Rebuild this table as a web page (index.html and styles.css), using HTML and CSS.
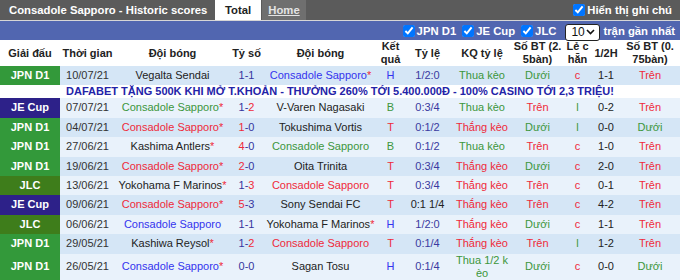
FILE: index.html
```html
<!DOCTYPE html>
<html lang="vi">
<head>
<meta charset="utf-8">
<title>Consadole Sapporo - Historic scores</title>
<link rel="stylesheet" href="styles.css">
</head>
<body>
<div class="page">
  <div class="topbar">
    <div class="title">Consadole Sapporo - Historic scores</div>
    <div class="tab tab-active">Total</div>
    <div class="tab tab-home"><a class="tab-link">Home</a></div>
    <label class="note"><input type="checkbox" class="cb" checked>Hiển thị ghi chú</label>
  </div>
  <div class="filterbar">
    <label class="flt"><input type="checkbox" class="cb" checked>JPN D1</label>
    <label class="flt"><input type="checkbox" class="cb" checked>JE Cup</label>
    <label class="flt"><input type="checkbox" class="cb" checked>JLC</label>
    <div class="count"><span class="count-val">10</span><svg class="chev" width="9" height="6" viewBox="0 0 9 6"><path d="M1 1 L4.5 4.5 L8 1" fill="none" stroke="#111" stroke-width="1.6"/></svg></div>
    <span class="flt-text">trận gần nhất</span>
  </div>
  <table class="scores">
    <colgroup>
      <col class="c1"><col class="c2"><col class="c3"><col class="c4"><col class="c5"><col class="c6">
      <col class="c7"><col class="c8"><col class="c9"><col class="c10"><col class="c11"><col class="c12">
    </colgroup>
    <thead>
      <tr>
        <th>Giải đấu</th><th>Thời gian</th><th>Đội bóng</th><th>Tỷ số</th><th>Đội bóng</th><th>Kết<br>quả</th>
        <th>Tỷ lệ</th><th>KQ tỷ lệ</th><th>Số BT (2.<br>5bàn)</th><th>Lẻ c<br>hẵn</th><th>1/2H</th><th>Số BT (0.<br>75bàn)</th>
      </tr>
    </thead>
    <tbody>
      <tr class="dark">
        <td class="lg jpn">JPN D1</td><td class="date">10/07/21</td><td>Vegalta Sendai</td><td class="sc">1-1</td>
        <td class="blue">Consadole Sapporo<span class="ast">*</span></td><td class="blue">H</td><td class="hc">1/2:0</td>
        <td class="g">Thua kèo</td><td class="g">Dưới</td><td class="r">c</td><td>1-1</td><td class="r">Trên</td>
      </tr>
      <tr class="banner"><td colspan="12">DAFABET TẶNG 500K KHI MỞ T.KHOẢN - THƯỞNG 260% TỚI 5.400.000Đ - 100% CASINO TỚI 2,3 TRIỆU!</td></tr>
      <tr class="light">
        <td class="lg jec">JE Cup</td><td class="date">07/07/21</td><td class="g">Consadole Sapporo<span class="ast">*</span></td><td class="sc">1-<span class="r">2</span></td>
        <td>V-Varen Nagasaki</td><td class="g">B</td><td class="hc">0:3/4</td>
        <td class="g">Thua kèo</td><td class="r">Trên</td><td class="g">l</td><td>0-2</td><td class="r">Trên</td>
      </tr>
      <tr class="dark">
        <td class="lg jpn">JPN D1</td><td class="date">04/07/21</td><td class="r">Consadole Sapporo<span class="ast">*</span></td><td class="sc"><span class="r">1</span>-0</td>
        <td>Tokushima Vortis</td><td class="r">T</td><td class="hc">0:1/2</td>
        <td class="r">Thắng kèo</td><td class="g">Dưới</td><td class="g">l</td><td>0-0</td><td class="g">Dưới</td>
      </tr>
      <tr class="light">
        <td class="lg jpn">JPN D1</td><td class="date">27/06/21</td><td>Kashima Antlers<span class="ast">*</span></td><td class="sc"><span class="r">4</span>-0</td>
        <td class="g">Consadole Sapporo</td><td class="g">B</td><td class="hc">0:1/2</td>
        <td class="g">Thua kèo</td><td class="r">Trên</td><td class="r">c</td><td>1-0</td><td class="r">Trên</td>
      </tr>
      <tr class="dark">
        <td class="lg jpn">JPN D1</td><td class="date">19/06/21</td><td class="r">Consadole Sapporo<span class="ast">*</span></td><td class="sc"><span class="r">2</span>-0</td>
        <td>Oita Trinita</td><td class="r">T</td><td class="hc">0:3/4</td>
        <td class="r">Thắng kèo</td><td class="g">Dưới</td><td class="r">c</td><td>2-0</td><td class="r">Trên</td>
      </tr>
      <tr class="light">
        <td class="lg jlc">JLC</td><td class="date">13/06/21</td><td>Yokohama F Marinos<span class="ast">*</span></td><td class="sc">1-<span class="r">3</span></td>
        <td class="r">Consadole Sapporo</td><td class="r">T</td><td class="hc">0:3/4</td>
        <td class="r">Thắng kèo</td><td class="r">Trên</td><td class="r">c</td><td>0-1</td><td class="r">Trên</td>
      </tr>
      <tr class="dark">
        <td class="lg jec">JE Cup</td><td class="date">09/06/21</td><td class="r">Consadole Sapporo<span class="ast">*</span></td><td class="sc"><span class="r">5</span>-3</td>
        <td>Sony Sendai FC</td><td class="r">T</td><td class="hc hc-dark">0:1 1/4</td>
        <td class="r">Thắng kèo</td><td class="r">Trên</td><td class="r">c</td><td>4-2</td><td class="r">Trên</td>
      </tr>
      <tr class="light">
        <td class="lg jlc">JLC</td><td class="date">06/06/21</td><td class="blue">Consadole Sapporo</td><td class="sc">1-1</td>
        <td>Yokohama F Marinos<span class="ast">*</span></td><td class="blue">H</td><td class="hc">1/2:0</td>
        <td class="r">Thắng kèo</td><td class="g">Dưới</td><td class="r">c</td><td>1-1</td><td class="r">Trên</td>
      </tr>
      <tr class="dark">
        <td class="lg jpn">JPN D1</td><td class="date">29/05/21</td><td>Kashiwa Reysol<span class="ast">*</span></td><td class="sc">1-<span class="r">2</span></td>
        <td class="r">Consadole Sapporo</td><td class="r">T</td><td class="hc">0:1/4</td>
        <td class="r">Thắng kèo</td><td class="r">Trên</td><td class="g">l</td><td>1-2</td><td class="r">Trên</td>
      </tr>
      <tr class="light">
        <td class="lg jpn">JPN D1</td><td class="date">26/05/21</td><td class="blue">Consadole Sapporo<span class="ast">*</span></td><td class="sc">0-0</td>
        <td>Sagan Tosu</td><td class="blue">H</td><td class="hc">0:1/4</td>
        <td class="g wrap">Thua 1/2 k<br>èo</td><td class="g">Dưới</td><td class="r">c</td><td>0-0</td><td class="g">Dưới</td>
      </tr>
    </tbody>
  </table>
</div>
</body>
</html>
```
FILE: styles.css
```css
html, body {
  margin: 0;
  padding: 0;
  background: #fff;
}
body {
  font-family: "Liberation Sans", Arial, sans-serif;
  font-size: 11px;
  color: #222;
}
.page {
  width: 680px;
}
.topbar {
  display: flex;
  height: 20px;
  background: #5b5b5b;
  border-bottom: 1px solid #d6d6d6;
}
.title {
  width: 215px;
  box-sizing: border-box;
  padding-left: 9px;
  line-height: 20px;
  color: #fff;
  font-weight: bold;
  font-size: 11.3px;
  white-space: nowrap;
}
.tab {
  line-height: 20px;
  text-align: center;
  font-weight: bold;
  font-size: 11.3px;
}
.tab-active {
  width: 46px;
  background: #fff;
  color: #222;
}
.tab-home {
  width: 44px;
  margin-left: 1px;
  background: #6f6f6f;
}
.tab-link {
  color: #e4e4e4;
  text-decoration: underline;
}
.note {
  margin-left: auto;
  padding-right: 8px;
  display: flex;
  align-items: center;
  color: #fff;
  font-weight: bold;
  font-size: 11.3px;
}
.cb {
  width: 12px;
  height: 12px;
  margin: 0 2px 0 0;
}
.filterbar {
  display: flex;
  justify-content: flex-end;
  align-items: center;
  height: 19px;
  background: #5166b0;
  padding-right: 5px;
  color: #fff;
  font-weight: bold;
}
.flt {
  display: flex;
  align-items: center;
  margin-left: 6px;
  font-size: 11.3px;
}
.count {
  margin-left: 9px;
  margin-top: 3px;
  width: 35px;
  height: 17px;
  box-sizing: border-box;
  display: flex;
  align-items: center;
  justify-content: space-between;
  padding: 0 4px 0 5px;
  border: 1px solid #222;
  border-radius: 3px;
  background: #fff;
  color: #111;
  font-weight: normal;
  font-size: 12px;
}
.chev {
  display: block;
}
.flt-text {
  margin-left: 3px;
  font-size: 11.3px;
}
.scores {
  width: 680px;
  border-collapse: collapse;
  table-layout: fixed;
}
.c1 { width: 60px; }
.c2 { width: 55px; }
.c3 { width: 115px; }
.c4 { width: 33px; }
.c5 { width: 115px; }
.c6 { width: 25px; }
.c7 { width: 49px; }
.c8 { width: 60px; }
.c9 { width: 51px; }
.c10 { width: 29px; }
.c11 { width: 28px; }
.c12 { width: 60px; }
.scores th {
  background: #fff;
  font-weight: bold;
  color: #222;
  line-height: 13px;
  height: 26px;
  padding: 0;
  text-align: center;
  vertical-align: middle;
}
.scores td {
  padding: 3px 0;
  line-height: 13.4px;
  text-align: center;
  white-space: nowrap;
  color: #222;
}
.scores td.wrap {
  line-height: 13px;
  padding: 0;
}
.dark td { background: #d5e6f6; }
.light td { background: #e9f2fb; }
.scores td.lg {
  color: #fff;
  font-weight: bold;
}
.scores td.jpn { background: #33993a; }
.scores td.jlc { background: #3e7d1b; }
.scores td.jec { background: #2d2189; }
.scores td.date { color: #333; }
.scores td.sc { color: #35359e; }
.scores td.hc { color: #3a3aa0; }
.scores td.hc-dark { color: #222; }
.scores td.blue { color: #3434ee; }
.scores td.g { color: #3c963c; }
.scores td.r, .scores .sc .r { color: #ef2a3a; }
.ast { color: #ef2a3a; }
.banner td {
  background: #fff;
  color: #2323a8;
  font-weight: bold;
  padding: 0;
  line-height: 13px;
  letter-spacing: 0;
}
```
